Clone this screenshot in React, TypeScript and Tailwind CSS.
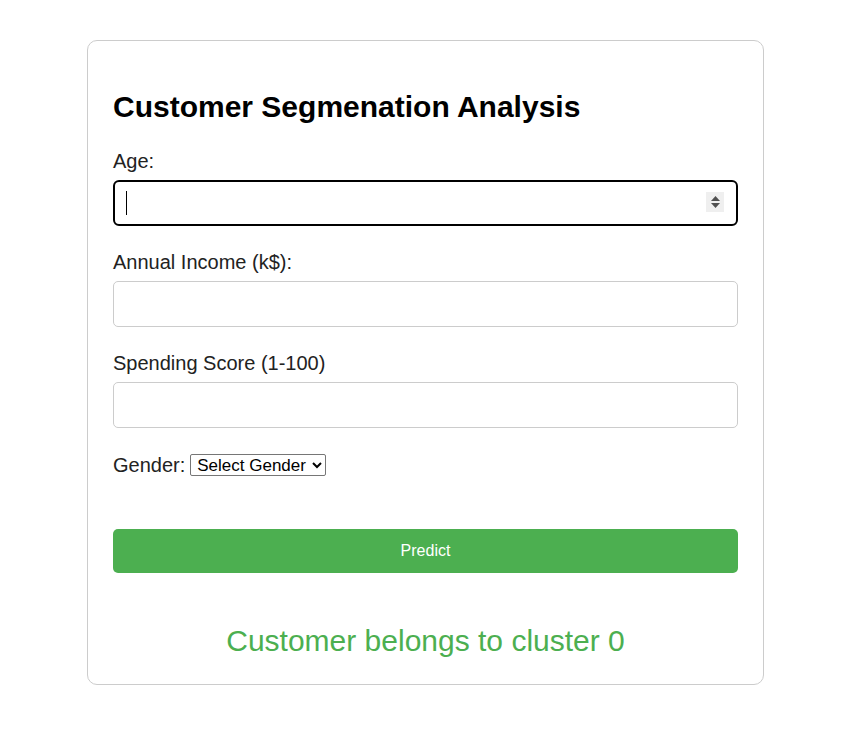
export default function App() {
  return (
    <div className="min-h-[748px] bg-white pt-[40px] font-['Liberation_Sans',Arial,sans-serif] text-[#1a1a1a]">
      <div className="ml-[87px] w-[677px] rounded-[10px] border border-[#cccccc] px-[25px] pt-[26px] pb-[27px]">
        <h2 className="mt-[24px] mb-[28px] text-[30px] leading-[32px] font-bold text-black">
          Customer Segmenation Analysis
        </h2>

        <div className="mb-[26px]">
          <label className="block mb-[8px] text-[20px] leading-[21px] text-[#222]">Age:</label>
          <div className="relative">
            <input
              type="text"
              className="block h-[46px] w-full rounded-[6px] border-2 border-black px-[12px] text-[18px] outline-none"
            />
            <span className="absolute left-[13px] top-[11px] h-[24px] w-px bg-black" />
            <span className="absolute right-[14px] top-[12px] flex h-[20px] w-[18px] flex-col items-center justify-center gap-[2px] bg-[#efefef]">
              <svg width="9" height="5" viewBox="0 0 9 5">
                <path d="M0 5 L4.5 0 L9 5 Z" fill="#505050" />
              </svg>
              <svg width="9" height="5" viewBox="0 0 9 5">
                <path d="M0 0 L4.5 5 L9 0 Z" fill="#505050" />
              </svg>
            </span>
          </div>
        </div>

        <div className="mb-[26px]">
          <label className="block mb-[8px] text-[20px] leading-[21px] text-[#222]">Annual Income (k$):</label>
          <input
            type="text"
            className="block h-[46px] w-full rounded-[5px] border border-[#cccccc] px-[12px] text-[18px] outline-none"
          />
        </div>

        <div className="mb-[26px]">
          <label className="block mb-[8px] text-[20px] leading-[21px] text-[#222]">Spending Score (1-100)</label>
          <input
            type="text"
            className="block h-[46px] w-full rounded-[5px] border border-[#cccccc] px-[12px] text-[18px] outline-none"
          />
        </div>

        <div className="flex items-center gap-[5px] text-[20px] leading-[21px] text-[#222]">
          <span>Gender:</span>
          <select className="h-[22px] w-[136px] rounded-[2px] border border-[#767676] pl-[2px] text-[17px] leading-[18px] text-black">
            <option>Select Gender</option>
            <option>Male</option>
            <option>Female</option>
          </select>
        </div>

        <button className="mt-[53px] block h-[44px] w-full rounded-[5px] bg-[#4caf50] text-[16px] text-white">
          Predict
        </button>

        <p className="mt-[52px] text-center text-[30px] leading-[32px] text-[#4caf50]">
          Customer belongs to cluster 0
        </p>
      </div>
    </div>
  )
}
